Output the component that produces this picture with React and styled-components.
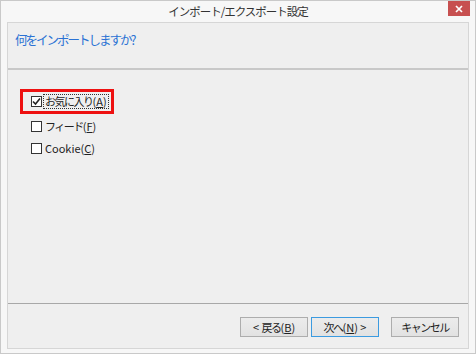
import React from 'react'
import styled, { createGlobalStyle } from 'styled-components'

const GlobalStyle = createGlobalStyle`
  html, body {
    margin: 0;
    padding: 0;
    background: #f7f7f7;
  }
  body {
    font-family: "Noto Sans CJK JP", "Noto Sans", sans-serif;
  }
`

function Check({ checked }) {
  return (
    <Box>
      {checked && (
        <svg width="9" height="9" viewBox="0 0 9 9">
          <path d="M1 4.5 L3.5 7 L8 1.5" fill="none" stroke="#222" strokeWidth="1.6" />
        </svg>
      )}
    </Box>
  )
}

function App() {
  return (
    <Window>
      <GlobalStyle />
      <TitleBar>
        <Title>インポート/エクスポート設定</Title>
        <CloseButton>
          <svg width="8" height="8" viewBox="0 0 8 8">
            <path d="M1 1 L7 7 M7 1 L1 7" stroke="#fff" strokeWidth="1.7" />
          </svg>
        </CloseButton>
      </TitleBar>
      <Client>
        <Header>
          <Question>何をインポートしますか?</Question>
        </Header>
        <Body>
          <Highlight>
            <Option>
              <Check checked />
              <FocusLabel><Kana>お気に入り</Kana>(<u>A</u>)</FocusLabel>
            </Option>
          </Highlight>
          <Option>
            <Check />
            <Label><Kana>フィード</Kana>(<u>F</u>)</Label>
          </Option>
          <Option>
            <Check />
            <Label>Cookie(<u>C</u>)</Label>
          </Option>
        </Body>
        <Footer>
          <Button>&lt; <Kana>戻る</Kana>(<u>B</u>)</Button>
          <Button $focused><Kana>次へ</Kana>(<u>N</u>) &gt;</Button>
          <Button $gap><Kana>キャンセル</Kana></Button>
        </Footer>
      </Client>
    </Window>
  )
}

export default App

const Window = styled.div`
  width: 476px;
  height: 354px;
  box-sizing: border-box;
  border: 1px solid #c9c9c9;
  background: #f7f7f7;
  display: flex;
  flex-direction: column;
  padding: 0 6px 4px 6px;
`

const TitleBar = styled.div`
  height: 21px;
  display: flex;
  align-items: center;
  justify-content: center;
  position: relative;
  flex-shrink: 0;
`

const Title = styled.div`
  font-size: 11.5px;
  letter-spacing: -1px;
  color: #333;
  margin-top: -1px;
  white-space: nowrap;
`

const CloseButton = styled.div`
  position: absolute;
  right: -1px;
  top: 0;
  width: 22px;
  height: 15px;
  background: #c75050;
  display: flex;
  align-items: center;
  justify-content: center;
`

const Client = styled.div`
  flex: 1;
  border: 1px solid #d6d6d6;
  background: #efefef;
  display: flex;
  flex-direction: column;
`

const Header = styled.div`
  height: 47px;
  border-bottom: 2px solid #c8c8c8;
  box-sizing: border-box;
  padding: 7px 0 0 7px;
`

const Question = styled.div`
  font-size: 12.5px;
  letter-spacing: -2px;
  color: #2a72d4;
  white-space: nowrap;
`

const Body = styled.div`
  flex: 1;
  padding: 19px 0 0 12px;
  display: flex;
  flex-direction: column;
  gap: 4px;
`

const Highlight = styled.div`
  width: 94px;
  height: 25px;
  box-sizing: border-box;
  border: 3px solid #ee1111;
  display: flex;
  align-items: center;
  padding-left: 8px;
  margin-bottom: -1px;
`

const Option = styled.div`
  display: flex;
  align-items: center;
  height: 18px;
  padding-left: 11px;
  ${Highlight} & {
    padding-left: 0;
  }
`

const Box = styled.div`
  width: 9px;
  height: 9px;
  border: 1px solid #333;
  background: #fff;
  display: flex;
  align-items: center;
  justify-content: center;
  margin-right: 2px;
  flex-shrink: 0;
`

const Kana = styled.span`
  letter-spacing: -1.5px;
`

const Label = styled.span`
  font-size: 11px;
  color: #222;
  line-height: 13px;
  padding: 0 1px;
  white-space: nowrap;
  u {
    text-decoration-thickness: 1px;
  }
`

const FocusLabel = styled(Label)`
  outline: 1px dotted #333;
`

const Footer = styled.div`
  height: 45px;
  box-sizing: border-box;
  border-top: 1px solid #a8a8a8;
  display: flex;
  align-items: flex-start;
  justify-content: flex-end;
  padding: 13px 9px 0 0;
  gap: 3px;
`

const Button = styled.div`
  width: 68px;
  height: 20px;
  box-sizing: border-box;
  border: 1px solid ${p => (p.$focused ? '#3c9be0' : '#adadad')};
  background: linear-gradient(#ececec, #e2e2e2);
  display: flex;
  align-items: center;
  justify-content: center;
  font-size: 11px;
  color: #222;
  white-space: pre;
  margin-left: ${p => (p.$gap ? 9 : 0)}px;
`
